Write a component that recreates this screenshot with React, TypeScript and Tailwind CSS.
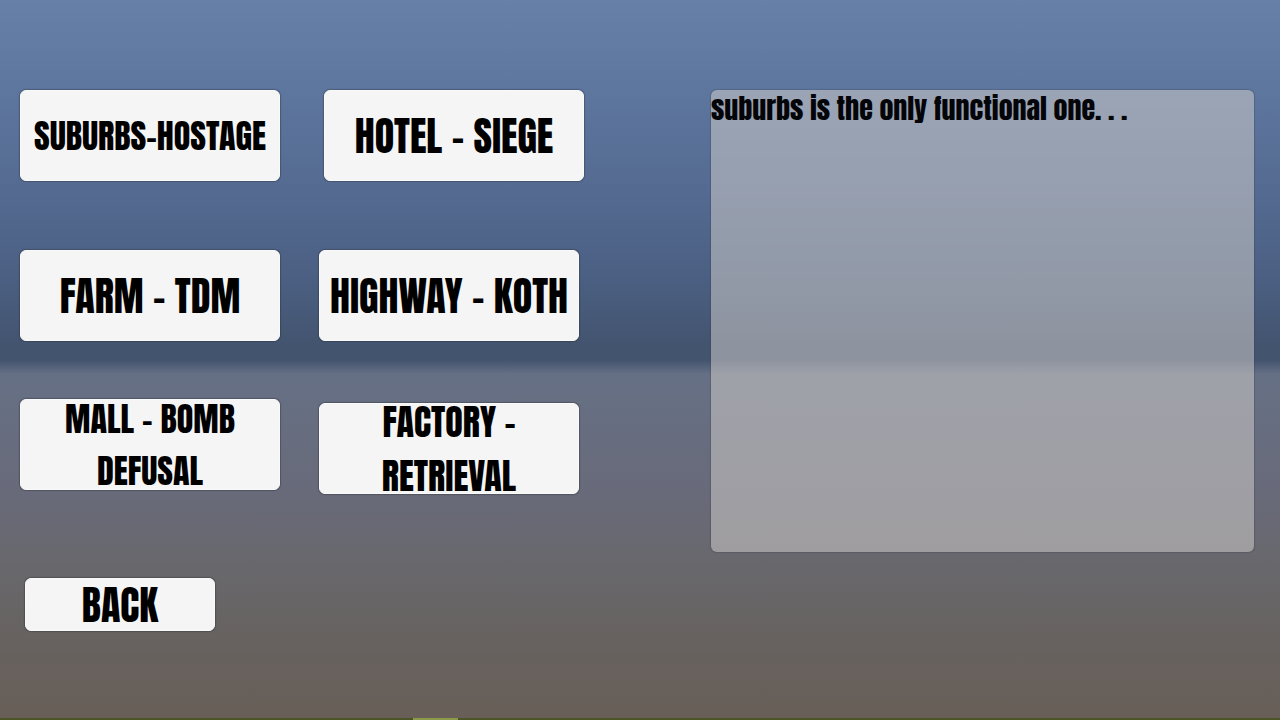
import { clsx } from 'clsx'
import type { ReactNode } from 'react'

function MenuButton({ className, children }: { className?: string; children: ReactNode }) {
  return (
    <button
      type="button"
      className={clsx(
        'flex shrink-0 items-center justify-center whitespace-nowrap rounded-md border border-[#fafafa] bg-[#f5f5f5] text-center text-black shadow-[0_0_1px_1px_rgba(40,40,50,0.35)]',
        className,
      )}
    >
      {children}
    </button>
  )
}

export default function App() {
  return (
    <div className="flex min-h-screen flex-col bg-[linear-gradient(to_bottom,#6680a8_0%,#5e779f_12%,#546a90_27%,#4b6083_38%,#43546f_48%,#43546f_50%,#667085_52%,#686a79_69%,#68676a_80%,#676260_89%,#685f58_99%)] font-['Anton','Liberation_Sans_Narrow','Roboto_Condensed','Liberation_Sans',sans-serif]">
      <main className="grid flex-1 grid-cols-[691fr_543fr] items-start pt-[90px] pr-[26px] pl-5">
        {/* Map list */}
        <nav className="flex flex-col">
          <div className="flex gap-11">
            <MenuButton className="h-[91px] w-[260px] text-[34px]">SUBURBS-HOSTAGE</MenuButton>
            <MenuButton className="h-[91px] w-[260px] text-[40px]">HOTEL - SIEGE</MenuButton>
          </div>
          <div className="mt-[69px] flex gap-[39px]">
            <MenuButton className="h-[91px] w-[260px] text-[40px]">FARM - TDM</MenuButton>
            <MenuButton className="h-[91px] w-[260px] text-[40px]">HIGHWAY - KOTH</MenuButton>
          </div>
          <div className="mt-[58px] flex h-[95px] gap-[39px]">
            <MenuButton className="h-[91px] w-[260px] self-start text-[34px] leading-[52px]">
              MALL - BOMB
              <br />
              DEFUSAL
            </MenuButton>
            <MenuButton className="h-[91px] w-[260px] self-end text-[36px] leading-[54px]">
              FACTORY -
              <br />
              RETRIEVAL
            </MenuButton>
          </div>
          <div className="mt-[84px] pl-[5px]">
            <MenuButton className="h-[53px] w-[190px] text-[40px]">BACK</MenuButton>
          </div>
        </nav>

        {/* Notes */}
        <section className="min-h-[462px] rounded-md bg-[#d2d0cc]/52 shadow-[0_0_1px_1px_rgba(50,55,70,0.25)]">
          <p className="whitespace-nowrap text-[28px] leading-9 text-[#040508]">
            suburbs is the only functional one. . .
          </p>
        </section>
      </main>

      {/* Ground strip */}
      <footer className="flex h-[2px] bg-[#4c5526]">
        <div className="ml-[32.3%] w-[3.5%] bg-[#8b9a48]" />
      </footer>
    </div>
  )
}
